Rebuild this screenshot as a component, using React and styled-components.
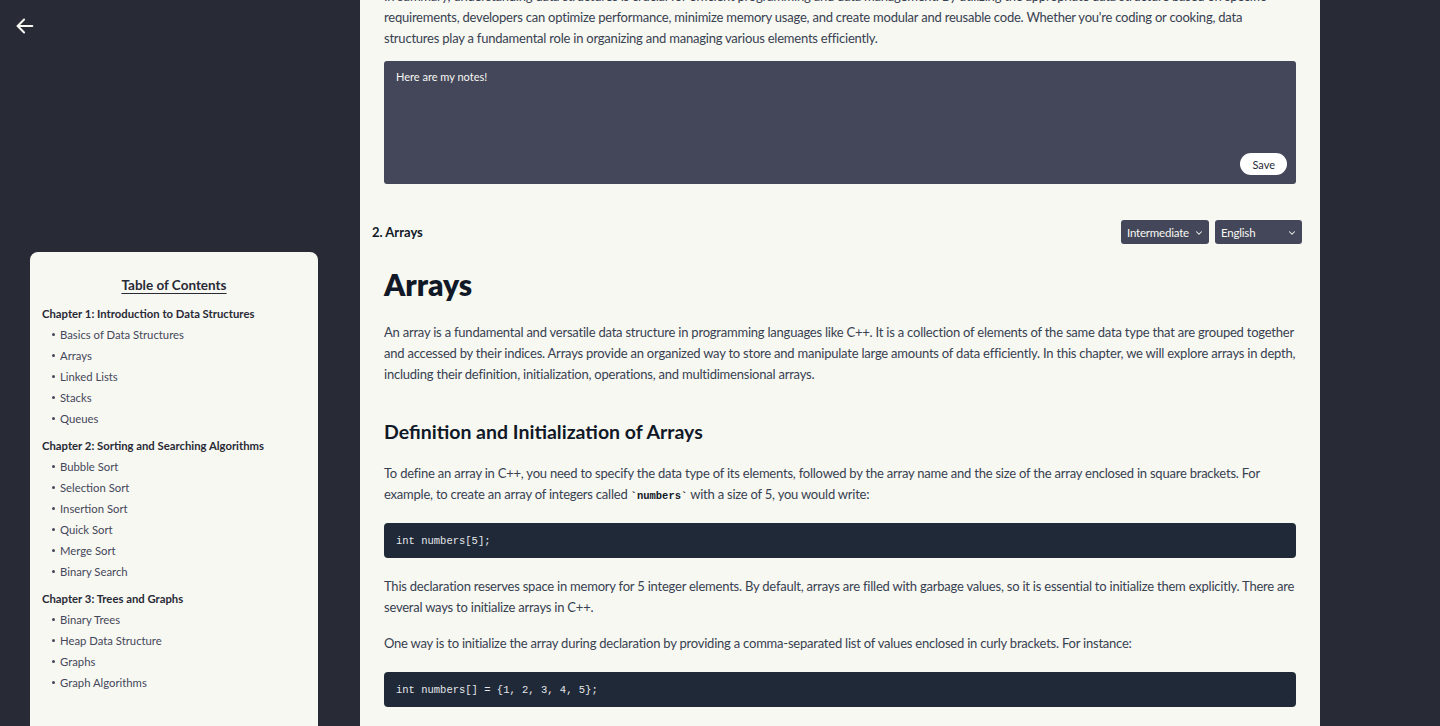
import React from 'react';
import styled, { createGlobalStyle } from 'styled-components';
import { ChevronDown } from 'lucide-react';

const GlobalStyle = createGlobalStyle`
  html, body {
    margin: 0;
    padding: 0;
    background: #282a36;
    overflow: hidden;
  }
  * {
    box-sizing: border-box;
  }
`;

const FONT = `'Lato', 'Noto Sans', sans-serif`;
const MONO = `'Liberation Mono', 'DejaVu Sans Mono', monospace`;

const Page = styled.div`
  display: flex;
  height: 726px;
  overflow: hidden;
  font-family: ${FONT};
`;

const Sidebar = styled.aside`
  width: 360px;
  flex-shrink: 0;
  display: flex;
  flex-direction: column;
  padding: 15px 42px 0 30px;
`;

const BackButton = styled.button`
  width: 30px;
  height: 28px;
  margin-left: -20px;
  padding: 0;
  border: none;
  background: none;
  color: #f8f8f2;
  display: flex;
  align-items: center;
  justify-content: center;
  cursor: pointer;
`;

const TocCard = styled.nav`
  margin-top: 215px;
  background: #f8f8f2;
  border-radius: 8px;
  padding: 25px 12px 40px;
  flex: 1;
  color: #44475a;
`;

const TocTitle = styled.h3`
  margin: 0 0 10px;
  text-align: center;
  font-size: 13.5px;
  font-weight: 700;
  text-decoration: underline;
  text-underline-offset: 3px;
  color: #282a36;
`;

const Chapter = styled.div`
  margin-bottom: 6px;
`;

const ChapterTitle = styled.div`
  font-size: 11.3px;
  font-weight: 700;
  line-height: 21px;
  color: #282a36;
`;

const TocList = styled.ul`
  margin: 0;
  padding-left: 18px;
  list-style: none;
`;

const TocItem = styled.li`
  position: relative;
  font-size: 11.3px;
  line-height: 21px;
  color: #44475a;

  &::before {
    content: '';
    position: absolute;
    left: -8px;
    top: 9px;
    width: 3px;
    height: 3px;
    border-radius: 50%;
    background: #44475a;
  }
`;

const Main = styled.main`
  width: 960px;
  flex-shrink: 0;
  background: #f8f8f2;
  overflow: hidden;
`;

const Scroll = styled.div`
  margin-top: -14px;
`;

const Section = styled.section`
  padding: 0 24px;
`;

const Paragraph = styled.p`
  margin: 0 0 ${(p) => (p.$flush ? 0 : 15)}px;
  font-size: 13px;
  letter-spacing: -0.22px;
  line-height: 21px;
  color: #374151;
`;

const NotesBox = styled.div`
  position: relative;
  height: 123px;
  margin-top: 12px;
`;

const NotesArea = styled.textarea`
  width: 100%;
  height: 100%;
  resize: none;
  border: none;
  border-radius: 3px;
  background: #44475a;
  color: #f8f8f2;
  font-family: ${FONT};
  font-size: 11px;
  padding: 9px 12px;
  outline: none;
`;

const SaveButton = styled.button`
  position: absolute;
  right: 9px;
  bottom: 9px;
  height: 22px;
  padding: 0 12px;
  border: none;
  border-radius: 11px;
  background: #ffffff;
  color: #282a36;
  font-family: ${FONT};
  font-size: 11px;
  cursor: pointer;
`;

const SectionHeader = styled.div`
  display: flex;
  align-items: center;
  justify-content: space-between;
  margin-top: 36px;
  padding: 0 18px 0 12px;
`;

const SectionLabel = styled.div`
  font-size: 13px;
  font-weight: 700;
  color: #111827;
`;

const Controls = styled.div`
  display: flex;
  gap: 6px;
`;

const SelectWrap = styled.div`
  position: relative;
  width: ${(p) => p.$width}px;
  height: 24px;
`;

const Select = styled.select`
  appearance: none;
  width: 100%;
  height: 100%;
  border: none;
  border-radius: 3px;
  background: #44475a;
  color: #f8f8f2;
  font-family: ${FONT};
  font-size: 11.5px;
  letter-spacing: -0.2px;
  padding: 0 14px 0 6px;
  outline: none;
`;

const Chevron = styled(ChevronDown)`
  position: absolute;
  right: 5px;
  top: 8px;
  color: #f8f8f2;
  pointer-events: none;
`;

const Article = styled.article`
  padding: 18px 24px 0;
`;

const H1 = styled.h1`
  margin: 0 0 16px;
  font-size: 30px;
  font-weight: 800;
  line-height: 44px;
  color: #111827;
`;

const H2 = styled.h2`
  margin: 32px 0 16px;
  font-size: 19.5px;
  font-weight: 700;
  line-height: 30px;
  color: #111827;
`;

const InlineCode = styled.code`
  font-family: ${MONO};
  font-size: 10.5px;
  font-weight: 700;
  line-height: 1;
  letter-spacing: 0;
  color: #111827;
`;

const CodeBlock = styled.pre`
  margin: 18px 0 18px;
  padding: 0 12px;
  height: 35px;
  display: flex;
  align-items: center;
  background: #1f2937;
  border-radius: 4px;
  color: #e5e7eb;
  font-family: ${MONO};
  font-size: 10.5px;
`;

const toc = [
  {
    title: 'Chapter 1: Introduction to Data Structures',
    items: ['Basics of Data Structures', 'Arrays', 'Linked Lists', 'Stacks', 'Queues'],
  },
  {
    title: 'Chapter 2: Sorting and Searching Algorithms',
    items: ['Bubble Sort', 'Selection Sort', 'Insertion Sort', 'Quick Sort', 'Merge Sort', 'Binary Search'],
  },
  {
    title: 'Chapter 3: Trees and Graphs',
    items: ['Binary Trees', 'Heap Data Structure', 'Graphs', 'Graph Algorithms'],
  },
];

function ArrowLeft() {
  return (
    <svg width="22" height="22" viewBox="0 0 24 24" fill="none" stroke="currentColor" strokeWidth="2.2" strokeLinecap="round" strokeLinejoin="round">
      <path d="M20 12H4" />
      <path d="M11 5l-7 7 7 7" />
    </svg>
  );
}

export default function App() {
  return (
    <>
      <GlobalStyle />
      <Page>
        <Sidebar>
          <BackButton aria-label="Back">
            <ArrowLeft />
          </BackButton>
          <TocCard>
            <TocTitle>Table of Contents</TocTitle>
            {toc.map((ch) => (
              <Chapter key={ch.title}>
                <ChapterTitle>{ch.title}</ChapterTitle>
                <TocList>
                  {ch.items.map((it) => (
                    <TocItem key={it}>{it}</TocItem>
                  ))}
                </TocList>
              </Chapter>
            ))}
          </TocCard>
        </Sidebar>

        <Main>
          <Scroll>
            <Section>
              <Paragraph $flush>
                In summary, understanding data structures is crucial for efficient programming and data management. By utilizing the appropriate data structure based on specific requirements, developers can optimize performance, minimize memory usage, and create modular and reusable code. Whether you're coding or cooking, data structures play a fundamental role in organizing and managing various elements efficiently.
              </Paragraph>
              <NotesBox>
                <NotesArea defaultValue="Here are my notes!" />
                <SaveButton>Save</SaveButton>
              </NotesBox>
            </Section>

            <SectionHeader>
              <SectionLabel>2. Arrays</SectionLabel>
              <Controls>
                <SelectWrap $width={88}>
                  <Select defaultValue="Intermediate">
                    <option>Beginner</option>
                    <option>Intermediate</option>
                    <option>Advanced</option>
                  </Select>
                  <Chevron size={10} strokeWidth={2.5} />
                </SelectWrap>
                <SelectWrap $width={87}>
                  <Select defaultValue="English">
                    <option>English</option>
                    <option>Español</option>
                  </Select>
                  <Chevron size={10} strokeWidth={2.5} />
                </SelectWrap>
              </Controls>
            </SectionHeader>

            <Article>
              <H1>Arrays</H1>
              <Paragraph>
                An array is a fundamental and versatile data structure in programming languages like C++. It is a collection of elements of the same data type that are grouped together and accessed by their indices. Arrays provide an organized way to store and manipulate large amounts of data efficiently. In this chapter, we will explore arrays in depth, including their definition, initialization, operations, and multidimensional arrays.
              </Paragraph>
              <H2>Definition and Initialization of Arrays</H2>
              <Paragraph>
                To define an array in C++, you need to specify the data type of its elements, followed by the array name and the size of the array enclosed in square brackets. For example, to create an array of integers called <InlineCode>`numbers`</InlineCode> with a size of 5, you would write:
              </Paragraph>
              <CodeBlock>int numbers[5];</CodeBlock>
              <Paragraph>
                This declaration reserves space in memory for 5 integer elements. By default, arrays are filled with garbage values, so it is essential to initialize them explicitly. There are several ways to initialize arrays in C++.
              </Paragraph>
              <Paragraph>
                One way is to initialize the array during declaration by providing a comma-separated list of values enclosed in curly brackets. For instance:
              </Paragraph>
              <CodeBlock>int numbers[] = {'{'}1, 2, 3, 4, 5{'}'};</CodeBlock>
            </Article>
          </Scroll>
        </Main>
      </Page>
    </>
  );
}
